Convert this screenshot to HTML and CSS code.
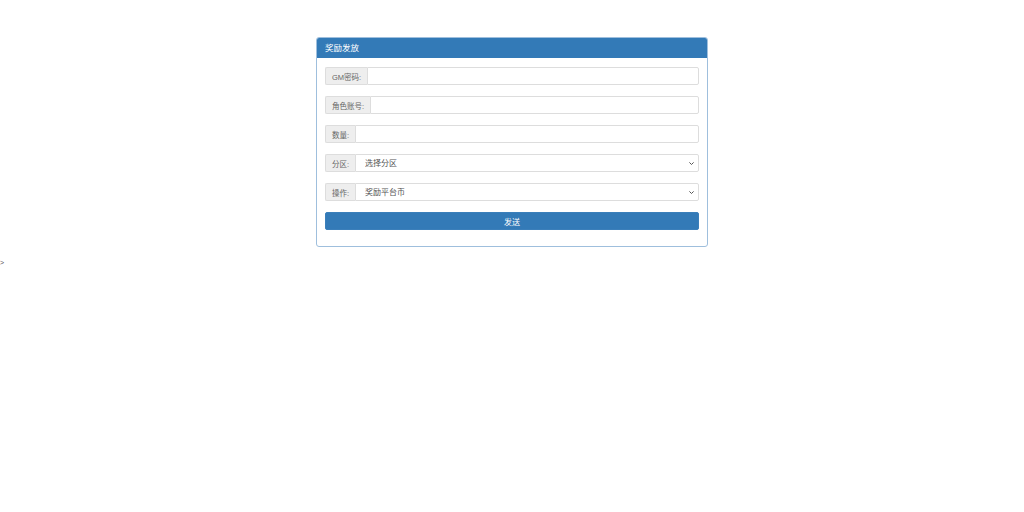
FILE: index.html
```html
<!DOCTYPE html>
<html lang="zh">
<head>
<meta charset="utf-8">
<title>奖励发放</title>
<link rel="stylesheet" href="styles.css">
</head>
<body>
<div class="container">
  <div class="panel">
    <div class="panel-heading">奖励发放</div>
    <div class="panel-body">
      <div class="input-group">
        <span class="addon">GM密码:</span>
        <input class="field" type="password">
      </div>
      <div class="input-group">
        <span class="addon">角色账号:</span>
        <input class="field" type="text">
      </div>
      <div class="input-group">
        <span class="addon">数量:</span>
        <input class="field" type="text">
      </div>
      <div class="input-group">
        <span class="addon">分区:</span>
        <div class="select-wrap">
          <select class="field select"><option>选择分区</option></select>
          <svg class="chev" width="5" height="3" viewBox="0 0 5 3"><path d="M0.4 0.4 L2.5 2.5 L4.6 0.4" fill="none" stroke="#555" stroke-width="1"/></svg>
        </div>
      </div>
      <div class="input-group">
        <span class="addon">操作:</span>
        <div class="select-wrap">
          <select class="field select"><option>奖励平台币</option></select>
          <svg class="chev" width="5" height="3" viewBox="0 0 5 3"><path d="M0.4 0.4 L2.5 2.5 L4.6 0.4" fill="none" stroke="#555" stroke-width="1"/></svg>
        </div>
      </div>
      <button class="btn" type="button">发送</button>
    </div>
  </div>
</div>
<div class="stray">&gt;</div>
</body>
</html>
```

FILE: styles.css
```css
html, body {
  margin: 0;
  padding: 0;
  background: #fff;
}
body {
  font-family: "Liberation Sans", "Noto Sans CJK SC", sans-serif;
  color: #333;
  font-size: 8px;
}
.container {
  display: flex;
  justify-content: center;
  padding-top: 37px;
}
.panel {
  width: 392px;
  box-sizing: border-box;
  border: 1px solid #9fbfdd;
  border-radius: 3px;
  margin-bottom: 11px;
  overflow: hidden;
}
.panel-heading {
  background: #337ab7;
  color: #fff;
  height: 20px;
  line-height: 20px;
  padding: 0 8px;
  font-size: 8.5px;
}
.panel-body {
  padding: 9px 8px 16px 8px;
  display: flex;
  flex-direction: column;
  gap: 11px;
}
.input-group {
  display: flex;
  height: 18px;
}
.addon {
  display: flex;
  align-items: center;
  padding: 0 6px;
  background: #eee;
  border: 1px solid #ddd;
  border-right: none;
  border-radius: 2px 0 0 2px;
  color: #666;
  font-size: 7.5px;
  white-space: nowrap;
}
.field {
  flex: 1;
  min-width: 0;
  height: 18px;
  box-sizing: border-box;
  border: 1px solid #ddd;
  border-radius: 0 2px 2px 0;
  background: #fff;
  margin: 0;
  padding: 0 6px;
  font-family: inherit;
  font-size: 8px;
  color: #555;
  outline: none;
}
.select-wrap {
  flex: 1;
  display: flex;
  position: relative;
}
.select {
  appearance: none;
  -webkit-appearance: none;
  padding-left: 9px;
}
.chev {
  position: absolute;
  right: 5px;
  top: 8px;
}
.btn {
  height: 18px;
  background: #337ab7;
  border: 1px solid #3b7fba;
  border-radius: 2px;
  color: #fff;
  font-family: inherit;
  font-size: 8px;
  padding: 0;
}
.stray {
  font-size: 7px;
  line-height: 10px;
  color: #555;
}
```
